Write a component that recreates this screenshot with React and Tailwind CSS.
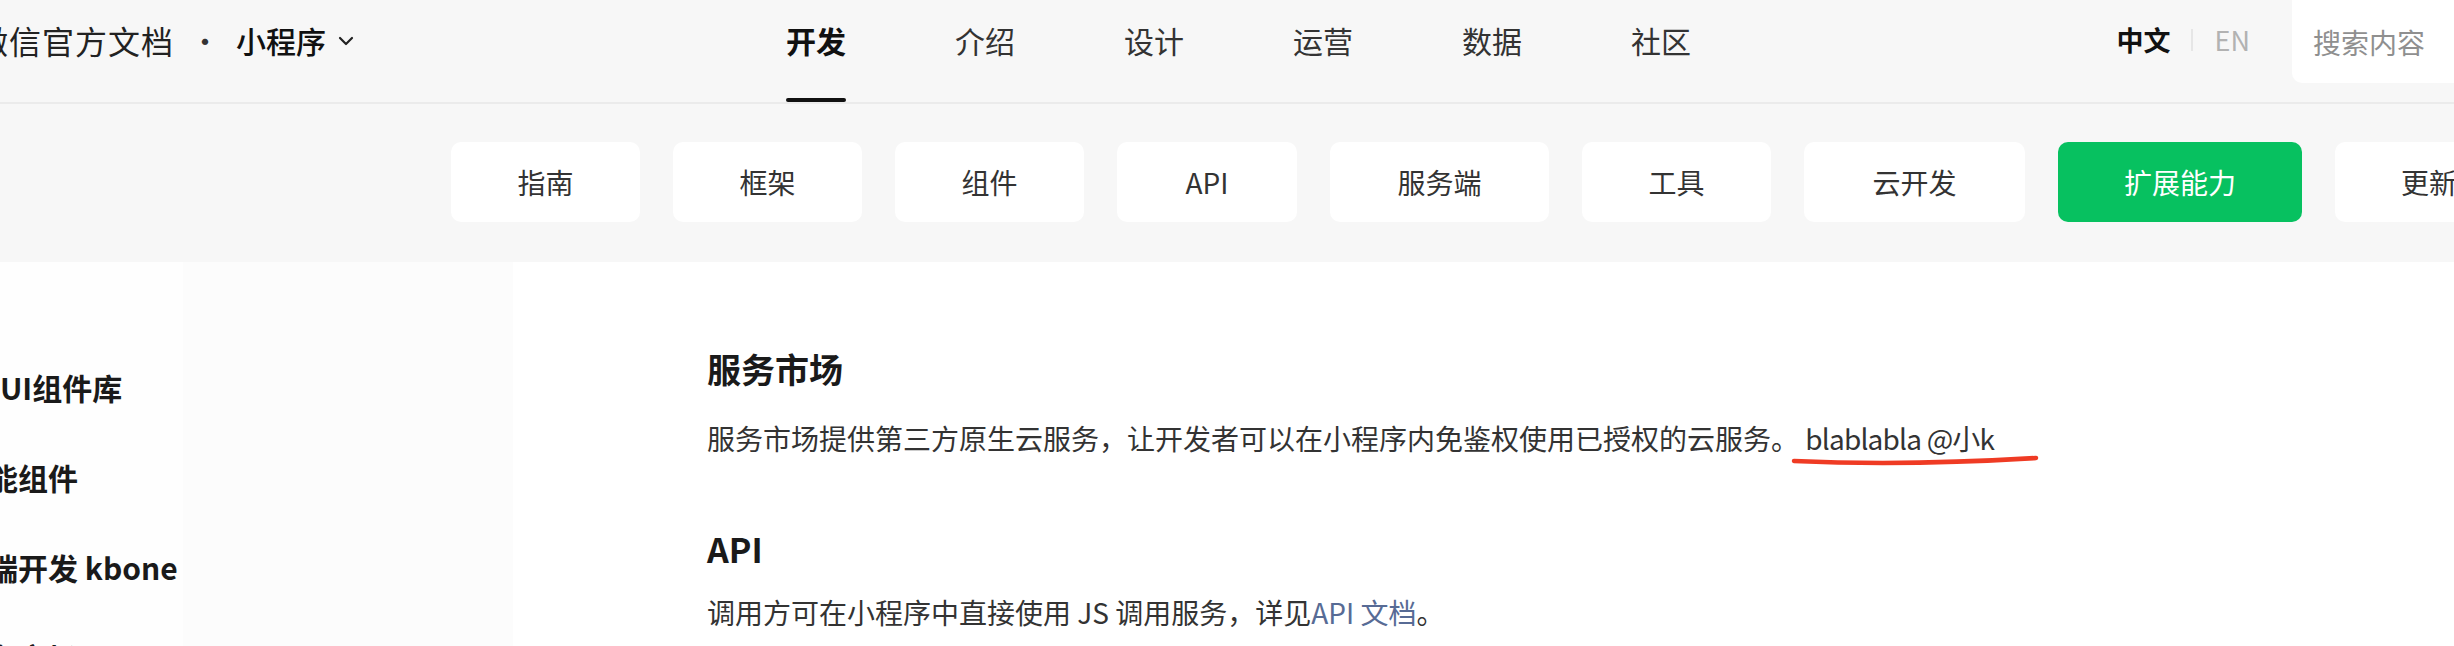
import { ChevronDown } from 'lucide-react';

const NAV = ['开发', '介绍', '设计', '运营', '数据', '社区'];

const TABS = [
    { label: '指南', w: 'w-[189px]' },
    { label: '框架', w: 'w-[189px]' },
    { label: '组件', w: 'w-[189px]' },
    { label: 'API', w: 'w-[180px]' },
    { label: '服务端', w: 'w-[219px]' },
    { label: '工具', w: 'w-[189px]' },
    { label: '云开发', w: 'w-[221px]' },
    { label: '扩展能力', w: 'w-[244px]', active: true },
    { label: '更新日志', w: 'w-[244px]' },
];

const SIDE = [
    { label: 'WeUI组件库', ml: '-ml-[45px]' },
    { label: '智能组件', ml: '-ml-[42px]' },
    { label: '多端开发 kbone', ml: '-ml-[42px]' },
    { label: '服务市场', ml: '-ml-[42px]' },
];

export default function App() {
    return (
        <div
            className="relative w-[2454px] h-[646px] overflow-hidden bg-white text-[#1a1a1a]"
            style={{ fontFamily: '"Noto Sans CJK SC", "Noto Sans", sans-serif' }}
        >
            {/* top header */}
            <header className="h-[104px] bg-[#f7f7f7] border-b-2 border-[#ebebeb] flex items-start">
                <div className="w-[810px] shrink-0 -ml-[24px] h-[80px] flex items-center whitespace-nowrap">
                    <span className="text-[32px] tracking-[1px] text-[#222]">微信官方文档</span>
                    <span className="text-[30px] mx-[16px] text-[#333]">·</span>
                    <span className="text-[30px] font-medium text-[#111]">小程序</span>
                    <ChevronDown className="w-[24px] h-[24px] ml-[8px] mt-[2px] text-[#222]" strokeWidth={2.2} />
                </div>

                <nav className="flex gap-[109px]">
                    {NAV.map((item, i) => (
                        <div key={item} className="flex flex-col h-[102px]">
                            <span
                                className={`text-[30px] leading-[80px] ${i === 0 ? 'font-semibold text-[#111]' : 'text-[#333]'}`}
                            >
                                {item}
                            </span>
                            <div className="flex-1" />
                            {i === 0 && <div className="h-[4px] bg-[#111] rounded-full" />}
                        </div>
                    ))}
                </nav>

                <div className="flex-1" />

                <div className="flex items-center h-[80px] whitespace-nowrap">
                    <span className="text-[27px] font-semibold text-[#111]">中文</span>
                    <span className="w-[2px] h-[22px] bg-[#e6e6e6] ml-[20px] mr-[22px]" />
                    <span className="text-[27px] text-[#b2b2b2]">EN</span>
                </div>
                <div className="ml-[42px] w-[162px] h-[83px] bg-white rounded-bl-[10px] flex items-center pl-[21px] whitespace-nowrap">
                    <span className="text-[28px] text-[#8f8f8f]">搜索内容</span>
                </div>
            </header>

            {/* sub tabs */}
            <div className="h-[158px] bg-[#f7f7f7] pt-[38px] pl-[451px] flex gap-[33px] whitespace-nowrap">
                {TABS.map((tab) => (
                    <div
                        key={tab.label}
                        className={`${tab.w} shrink-0 h-[80px] rounded-[10px] flex items-center justify-center text-[28px] ${
                            tab.active ? 'bg-[#07c160] text-white' : 'bg-white text-[#333]'
                        }`}
                    >
                        {tab.label}
                    </div>
                ))}
            </div>

            {/* body */}
            <div className="flex h-[384px]">
                <aside className="w-[513px] shrink-0 bg-[linear-gradient(to_right,#fefefe_183px,#fcfcfc_183px)] pt-[80px]">
                    {SIDE.map((s) => (
                        <div
                            key={s.label}
                            className={`${s.ml} text-[30px] leading-[90px] font-semibold text-[#1a1a1a] whitespace-nowrap`}
                        >
                            {s.label}
                        </div>
                    ))}
                </aside>

                <main className="flex-1 pl-[194px] pt-[83px]">
                    <h2 className="text-[34px] leading-[48px] font-semibold text-[#1a1a1a]">服务市场</h2>
                    <p className="mt-[21px] text-[28px] leading-[48px] text-[#333] whitespace-nowrap">
                        服务市场提供第三方原生云服务，让开发者可以在小程序内免鉴权使用已授权的云服务。{' '}
                        <span className="tracking-[-0.8px]">blablabla @小k</span>
                    </p>
                    <h2 className="mt-[63px] text-[34px] leading-[48px] font-semibold text-[#1a1a1a]">API</h2>
                    <p className="mt-[15px] text-[28px] leading-[48px] text-[#333] whitespace-nowrap">
                        调用方可在小程序中直接使用 JS 调用服务，详见<span className="text-[#576b95]">API 文档</span>。
                    </p>
                </main>
            </div>

            {/* hand-drawn red annotation */}
            <svg
                className="absolute left-[1786px] top-[450px] w-[260px] h-[20px]"
                viewBox="0 0 260 20"
                fill="none"
            >
                <path
                    d="M8 11 Q 120 16 250 8"
                    stroke="#ef3b24"
                    strokeWidth="4.5"
                    strokeLinecap="round"
                />
            </svg>
        </div>
    );
}
